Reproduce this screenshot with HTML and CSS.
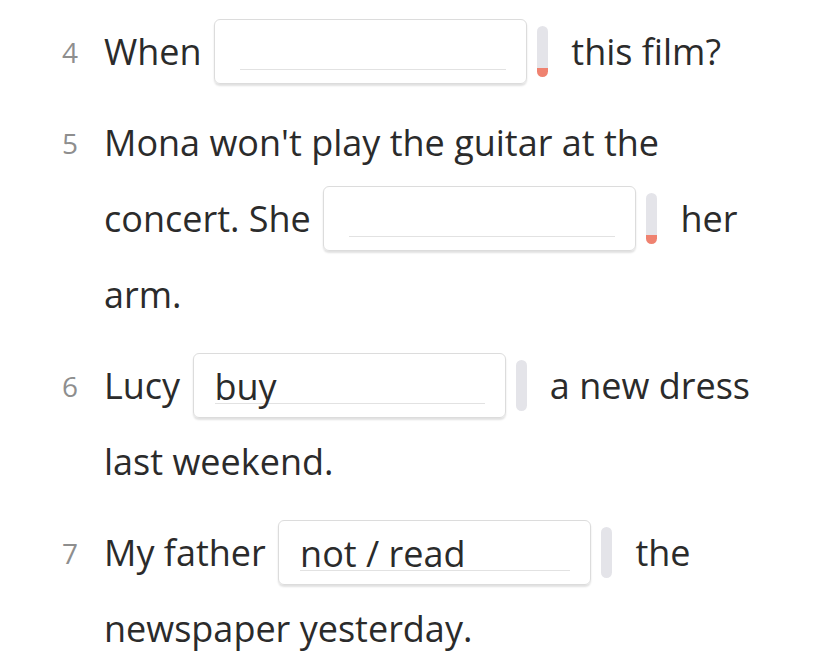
FILE: index.html
```html
<!DOCTYPE html>
<html lang="en">
<head>
  <meta charset="UTF-8">
  <title>Past simple</title>
  <meta name="viewport" content="width=device-width, initial-scale=1.0">
  <link rel="stylesheet" href="styles.css">
</head>
<body>

  <!-- Aufgaben -->
  <div class="exercise">
    <div class="item">
      <span class="num">4</span>
      <p class="sentence">When <span class="gap"><span class="field"></span></span><span class="marker wrong"></span> this film?</p>
    </div>

    <div class="item">
      <span class="num">5</span>
      <p class="sentence">Mona won't play the guitar at the concert. She <span class="gap"><span class="field"></span></span><span class="marker wrong"></span> her arm.</p>
    </div>

    <div class="item">
      <span class="num">6</span>
      <p class="sentence">Lucy <span class="gap"><span class="field">buy</span></span><span class="marker"></span> a new dress last weekend.</p>
    </div>

    <div class="item">
      <span class="num">7</span>
      <p class="sentence">My father <span class="gap"><span class="field">not / read</span></span><span class="marker"></span> the newspaper yesterday.</p>
    </div>
  </div>

</body>
</html>
```

FILE: styles.css
```css
body {
  font-family: "Open Sans", "Noto Sans", sans-serif;
  background: #ffffff;
  color: #2b2b2b;
  margin: 0;
  padding: 14px 0 0 0;
}

.exercise {
  width: 720px;
  padding-left: 60px;
}

.item {
  display: flex;
  margin-bottom: 15px;
}

.num {
  width: 42px;
  flex-shrink: 0;
  font-size: 28px;
  line-height: 76px;
  color: #8e8e8e;
  padding-left: 2px;
}

.sentence {
  margin: 0;
  font-size: 36px;
  line-height: 76px;
  width: 660px;
}

.gap {
  display: inline-block;
  vertical-align: middle;
  box-sizing: border-box;
  width: 313px;
  height: 65px;
  margin: 0 6px 0 3px;
  border: 1px solid #dcdcdc;
  border-radius: 6px;
  box-shadow: 0 2px 2px rgba(0, 0, 0, 0.12);
  padding: 0 20px 0 21px;
  position: relative;
  top: -4px;
}

.field {
  display: block;
  height: 49px;
  line-height: 66px;
  border-bottom: 1px solid #e2e2e2;
  margin-left: 4px;
}

.gap .field:not(:empty) {
  margin-left: 0;
}

.marker {
  display: inline-block;
  vertical-align: middle;
  width: 11px;
  height: 51px;
  margin: 0 14px 0 4px;
  border-radius: 6px;
  background: #e4e4e9;
  position: relative;
  top: -4px;
}

.marker.wrong {
  background: linear-gradient(to bottom, #e4e4e9 0, #e4e4e9 42px, #ef8270 42px);
}
```
